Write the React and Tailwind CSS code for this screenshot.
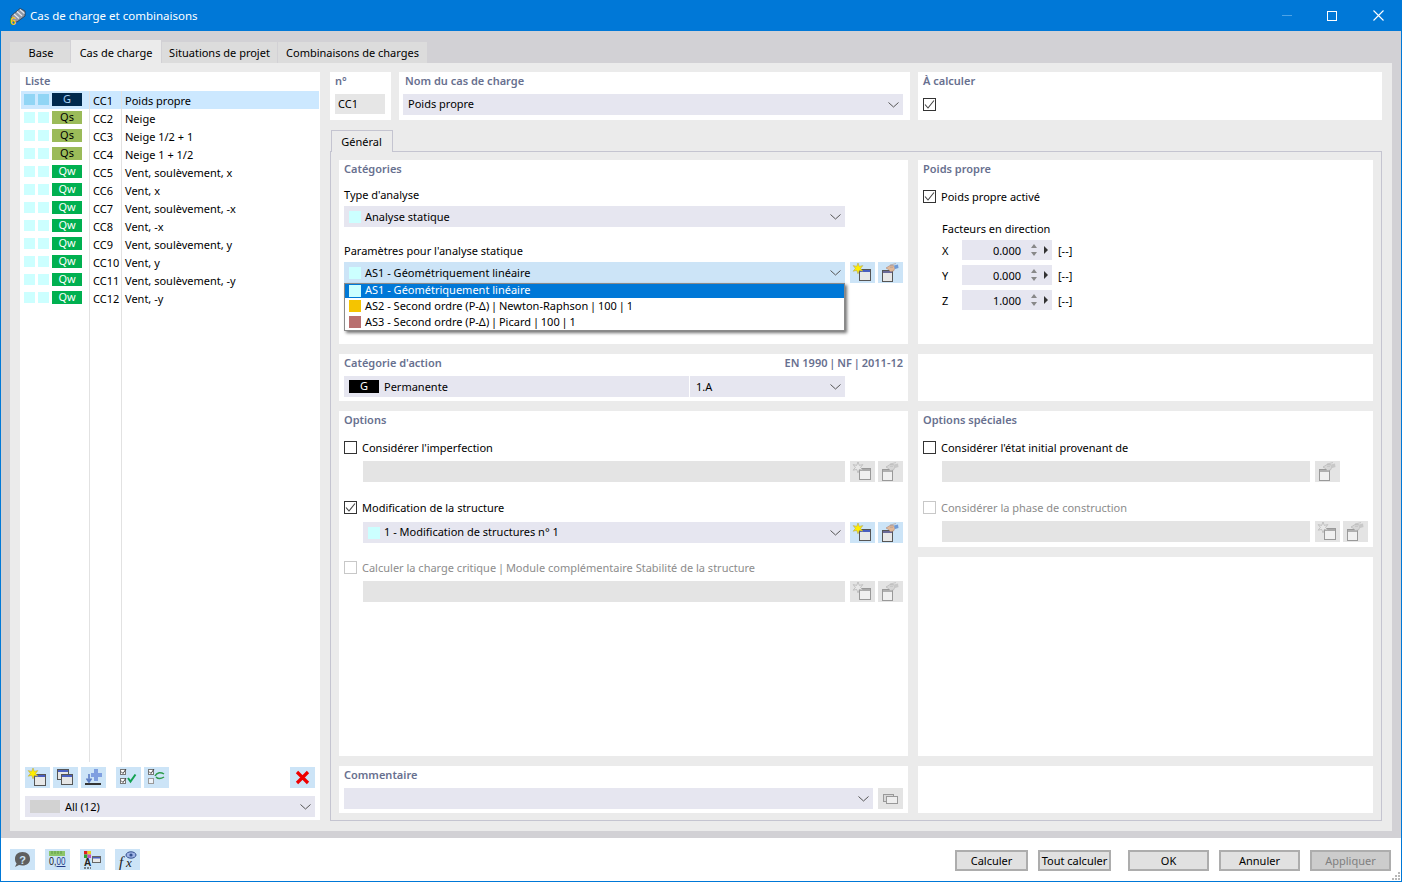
import React from "react";

const rows = [
  ["G", "CC1", "Poids propre"],
  ["Qs", "CC2", "Neige"],
  ["Qs", "CC3", "Neige 1/2 + 1"],
  ["Qs", "CC4", "Neige 1 + 1/2"],
  ["Qw", "CC5", "Vent, soulèvement, x"],
  ["Qw", "CC6", "Vent, x"],
  ["Qw", "CC7", "Vent, soulèvement, -x"],
  ["Qw", "CC8", "Vent, -x"],
  ["Qw", "CC9", "Vent, soulèvement, y"],
  ["Qw", "CC10", "Vent, y"],
  ["Qw", "CC11", "Vent, soulèvement, -y"],
  ["Qw", "CC12", "Vent, -y"],
];

const badge = {
  G: "bg-[#00294d] text-[#a9d3f5]",
  Qs: "bg-[#9bbb59] text-black",
  Qw: "bg-[#00b050] text-white",
};

function T({ children, className = "" }) {
  return <span className={`pt-[2px] ${className}`}>{children}</span>;
}

function Pipe() {
  return <span className="-mx-px">|</span>;
}

function Chevron() {
  return (
    <svg width="11" height="6" viewBox="0 0 11 6" className="shrink-0">
      <path d="M0.5 0.5 L5.5 5 L10.5 0.5" fill="none" stroke="#555" strokeWidth="1" />
    </svg>
  );
}

function Check({ on, disabled }) {
  return (
    <span className={`w-[13px] h-[13px] shrink-0 border bg-white flex items-center justify-center ${disabled ? "border-[#c8c8c8]" : "border-[#333]"}`}>
      {on && (
        <svg width="11" height="11" viewBox="0 0 11 11">
          <path d="M1 5.5 L4 9 L10 1.5" fill="none" stroke="#444" strokeWidth="1.1" />
        </svg>
      )}
    </span>
  );
}

function IconBtn({ children, off, className = "" }) {
  return (
    <span className={`w-[25px] h-[21px] shrink-0 flex items-center justify-center ${off ? "bg-[#e4e4e4]" : "bg-[#cce4f7]"} ${className}`}>
      {children}
    </span>
  );
}

function NewIcon({ off }) {
  return (
    <svg width="25" height="21" viewBox="0 0 25 21">
      <rect x="9.5" y="7.5" width="11" height="11" fill={off ? "#f0f0f0" : "#e8e8e8"} stroke={off ? "#999" : "#555"} />
      <rect x="10" y="8" width="10" height="2" fill={off ? "#aaa" : "#4a5fc0"} />
      <path d="M8 1 L9.3 4.4 L12.8 3.6 L10.6 6.4 L12.8 9.2 L9.3 8.4 L8 11.8 L6.7 8.4 L3.2 9.2 L5.4 6.4 L3.2 3.6 L6.7 4.4 Z" fill={off ? "#e8e8e8" : "#ffee00"} stroke={off ? "#aaa" : "#b9a84a"} strokeWidth="0.6" />
    </svg>
  );
}

function HandIcon({ off }) {
  return (
    <svg width="25" height="21" viewBox="0 0 25 21">
      <rect x="4.5" y="8.5" width="10" height="11" fill={off ? "#f0f0f0" : "#e8e8e8"} stroke={off ? "#999" : "#555"} />
      <rect x="5" y="9" width="9" height="2" fill={off ? "#b0b0b0" : "#6a6a98"} />
      <path d="M8 6 L12 3.5 L15.5 3.5 L17 6 L15.5 9 L12.5 9.5 L10.5 7.5 Z" fill={off ? "#d6d6d6" : "#e0b898"} stroke={off ? "#b0b0b0" : "#b08a78"} strokeWidth="0.6" />
      <path d="M12 3 L18 1.6 M12 5.2 L15 5.2" fill="none" stroke={off ? "#b8b8b8" : "#a89a98"} strokeWidth="0.7" />
      <path d="M16 3.5 L20 2.5 L20.5 6 L17 7 Z" fill={off ? "#c8c8c8" : "#6f9ad6"} />
    </svg>
  );
}

function Select({ w, active, children, off }) {
  return (
    <div className={`${w} h-[21px] shrink-0 flex items-center pl-[5px] pr-[4px] ${active ? "bg-[#cce4f7]" : off ? "bg-[#e4e4e4]" : "bg-[#e6e6f0]"}`}>
      <div className="flex-1 flex items-center min-w-0">{children}</div>
      {!off && <Chevron />}
    </div>
  );
}

function Sw({ c = "bg-[#ccffff]" }) {
  return <span className={`w-[12px] h-[12px] shrink-0 mr-[4px] ${c}`} />;
}

function Head({ children, right, className = "" }) {
  return (
    <div className={`h-[18px] leading-[18px] flex justify-between font-semibold text-[#68708f] ${className}`}>
      <span>{children}</span>
      {right && <span>{right}</span>}
    </div>
  );
}

function Card({ className = "", children }) {
  return <div className={`bg-white px-[5px] ${className}`}>{children}</div>;
}

function Factor({ l, v }) {
  return (
    <div className="flex items-center h-[20px] mb-[5px]">
      <T className="w-[20px]">{l}</T>
      <div className="w-[90px] h-[20px] bg-[#e6e6f0] flex items-center justify-end pr-[4px]">
        <T className="mr-[10px]">{v}</T>
        <svg width="6" height="14" viewBox="0 0 6 14" className="mr-[7px]">
          <path d="M3 1 L6 5 H0 Z" fill="#888" />
          <path d="M3 13 L6 9 H0 Z" fill="#888" />
        </svg>
        <svg width="4" height="8" viewBox="0 0 4 8">
          <path d="M0 0 L4 4 L0 8 Z" fill="#333" />
        </svg>
      </div>
      <T className="ml-[6px]">[--]</T>
    </div>
  );
}

function SmallWin({ x, y }) {
  return (
    <g>
      <rect x={x + 0.5} y={y + 0.5} width="11" height="10" fill="#e6e6e6" stroke="#555" />
      <rect x={x + 1} y={y + 1} width="10" height="2" fill="#4a5fc0" />
    </g>
  );
}

function CheckIcon({ swap }) {
  return (
    <svg width="25" height="21" viewBox="0 0 25 21">
      <rect x="4.5" y="2.5" width="5" height="5" fill="#fff" stroke="#777" />
      <path d="M5 4.5 L7 6.5 L10 2" fill="none" stroke="#444" />
      <rect x="4.5" y="11.5" width="5" height="5" fill={swap ? "#eef4fa" : "#fff"} stroke={swap ? "#999" : "#777"} />
      {!swap && <path d="M5 13.5 L7 15.5 L10 11" fill="none" stroke="#444" />}
      {swap ? (
        <>
          <path d="M11 9 C13 5 17 5 20 7" fill="none" stroke="#2d9c4a" strokeWidth="1.5" />
          <path d="M20 10 C17 12 14 12 12 10" fill="none" stroke="#2d9c4a" strokeWidth="1.5" />
        </>
      ) : (
        <path d="M12 11 L14.5 14.5 L19.5 7.5" fill="none" stroke="#12a150" strokeWidth="2" />
      )}
    </svg>
  );
}

function Footer({ children, off, w = "w-[81px]" }) {
  return (
    <span className={`${w} h-[21px] flex items-center justify-center border-2 border-[#adadad] ${off ? "bg-[#cccccc] text-[#7f7f7f]" : "bg-[#e1e1e1] text-black"}`}>
      <T>{children}</T>
    </span>
  );
}

export default function App() {
  return (
    <div className="w-[1402px] h-[882px] flex flex-col bg-[#d2d1d5] border-x border-b border-[#0078d7] text-black text-[11px] overflow-hidden font-['Noto_Sans','Open_Sans',sans-serif]">
      {/* title bar */}
      <div className="h-[31px] shrink-0 bg-[#0078d7] flex items-center pl-[8px] text-white text-[11.5px]">
        <svg width="17" height="18" viewBox="0 0 17 18" className="mr-[4px]">
          <path d="M2 9 L11 1.5 L16 4 L16 9 L8 15 L3 14 Z" fill="#8f99a8" stroke="#2f3540" strokeWidth="0.8" />
          <path d="M5 7 L10 11.5 M8 4.5 L13 9 M11 2.5 L15.5 6.5" stroke="#e6e9ef" strokeWidth="1.1" />
          <text x="1" y="17.5" fontSize="11" fontWeight="700" fill="#f5c518" fontFamily="Liberation Sans">6</text>
        </svg>
        <span>Cas de charge et combinaisons</span>
        <div className="ml-auto flex items-center">
          <span className="w-[10px] h-px bg-[#4da3e6] mr-[35px]" />
          <span className="w-[10px] h-[10px] border border-white mr-[36px]" />
          <svg width="11" height="11" viewBox="0 0 11 11" className="mr-[17px]">
            <path d="M0.5 0.5 L10.5 10.5 M10.5 0.5 L0.5 10.5" stroke="#fff" strokeWidth="1.1" />
          </svg>
        </div>
      </div>

      {/* tabs */}
      <div className="h-[22px] mt-[10px] ml-[9px] flex items-end shrink-0">
        <span className="w-[60px] h-[21px] bg-[#dcdcdc] flex items-center justify-center mr-px pl-[2px]"><T>Base</T></span>
        <span className="w-[90px] h-[23px] bg-[#ebebeb] flex items-center justify-center mr-px"><span className="pt-[4px]">Cas de charge</span></span>
        <span className="w-[115px] h-[21px] bg-[#dcdcdc] flex items-center justify-center mr-px"><T>Situations de projet</T></span>
        <span className="w-[149px] h-[21px] bg-[#dcdcdc] flex items-center justify-center"><T>Combinaisons de charges</T></span>
      </div>

      {/* panel */}
      <div className="w-[1382px] h-[768px] ml-[9px] shrink-0 bg-[#ebebeb] pt-[9px] pl-[10px] flex gap-[10px]">
        {/* list */}
        <div className="w-[300px] h-[748px] bg-white flex flex-col relative">
          <div className="h-[19px] leading-[18px] pl-[5px] font-semibold text-[#68708f]">Liste</div>
          <div className="h-[671px] pl-px relative">
            {rows.map(([b, id, name], i) => (
              <div key={id} className={`w-[298px] h-[18px] flex items-center ${i === 0 ? "bg-[#cce8ff]" : ""}`}>
                <span className={`ml-[3px] mb-px w-[11px] h-[11px] ${i === 0 ? "bg-[#91d5f5]" : "bg-[#ccffff]"}`} />
                <span className={`ml-[3px] mb-px w-[11px] h-[11px] ${i === 0 ? "bg-[#91d5f5]" : "bg-[#ccffff]"}`} />
                <span className={`ml-[3px] mb-px w-[30px] h-[13px] flex items-center justify-center ${badge[b]}`}>{b}</span>
                <T className="ml-[11px] w-[32px]">{id}</T>
                <T>{name}</T>
              </div>
            ))}
            <span className="absolute left-[69px] top-0 bottom-0 w-px bg-[#e2e2e2]" />
            <span className="absolute left-[101px] top-0 bottom-0 w-px bg-[#e2e2e2]" />
          </div>
          <div className="flex mt-[5px] pl-[5px] h-[21px]">
            <IconBtn><NewIcon /></IconBtn>
            <IconBtn className="ml-[3px]">
              <svg width="25" height="21" viewBox="0 0 25 21"><SmallWin x={4} y={2} /><SmallWin x={8} y={7} /></svg>
            </IconBtn>
            <IconBtn className="ml-[3px]">
              <svg width="25" height="21" viewBox="0 0 25 21">
                <path d="M4 17 H20" stroke="#333" strokeWidth="2" />
                <path d="M8 7 V14 M5.5 11.5 L8 15 L10.5 11.5" fill="none" stroke="#5b7cc4" strokeWidth="1.6" />
                <path d="M13 2 H17 V6 H21 V10 H17 V14 H13 V10 H10 V6 H13 Z" fill="#7f9fe0" />
              </svg>
            </IconBtn>
            <IconBtn className="ml-[10px]"><CheckIcon /></IconBtn>
            <IconBtn className="ml-[3px]"><CheckIcon swap /></IconBtn>
            <IconBtn className="ml-auto mr-[5px]">
              <svg width="25" height="21" viewBox="0 0 25 21">
                <path d="M7 5 L18 16 M18 5 L7 16" stroke="#ee0000" strokeWidth="3.2" />
              </svg>
            </IconBtn>
          </div>
          <div className="mt-[8px] ml-[5px]">
            <Select w="w-[290px]">
              <span className="w-[30px] h-[13px] bg-[#d2d2d2] mr-[5px]" />
              <T>All (12)</T>
            </Select>
          </div>
        </div>

        {/* right */}
        <div className="w-[1052px] flex flex-col">
          <div className="flex gap-[8px] h-[48px]">
            <Card className="w-[61px]">
              <Head>n°</Head>
              <div className="mt-[4px] w-[50px] h-[20px] bg-[#e6e6e6] flex items-center pl-[3px]">CC1</div>
            </Card>
            <Card className="w-[511px]">
              <Head className="ml-px">Nom du cas de charge</Head>
              <div className="mt-[4px] -ml-px">
                <Select w="w-[500px]">Poids propre</Select>
              </div>
            </Card>
            <Card className="w-[464px]">
              <Head>À calculer</Head>
              <div className="mt-[8px]"><Check on /></div>
            </Card>
          </div>

          <div className="mt-[10px] ml-px w-[62px] h-[22px] border border-b-0 border-[#c4c4d0] bg-[#ebebeb] flex items-center justify-center pr-px relative z-10"><T>Général</T></div>
          <div className="-mt-px w-[1052px] h-[670px] border border-[#c4c4d0] pt-[8px] pl-[8px]">
            <div className="grid grid-cols-[569px_455px] grid-rows-[184px_47px_136px_199px_47px] gap-[10px]">
              {/* Catégories */}
              <Card className="relative">
                <Head>Catégories</Head>
                <div className="mt-[9px] h-[16px] leading-[16px]">Type d'analyse</div>
                <div className="mt-[3px]">
                  <Select w="w-[501px]"><Sw /><T>Analyse statique</T></Select>
                </div>
                <div className="mt-[16px] h-[16px] leading-[16px]">Paramètres pour l'analyse statique</div>
                <div className="mt-[3px] flex items-center">
                  <Select w="w-[501px]" active><Sw /><T>AS1 - Géométriquement linéaire</T></Select>
                  <IconBtn className="ml-[5px]"><NewIcon /></IconBtn>
                  <IconBtn className="ml-[3px]"><HandIcon /></IconBtn>
                </div>
                <div className="absolute left-[5px] top-[123px] w-[501px] h-[48px] bg-white border border-[#8a8a8a] shadow-[2px_2px_3px_rgba(0,0,0,0.55)] z-20 flex flex-col">
                  <div className="h-[14px] bg-[#0078d7] text-white flex items-center pl-[4px]"><Sw /><span className="pb-[2px]">AS1 - Géométriquement linéaire</span></div>
                  <div className="h-[16px] flex items-center pl-[4px]"><Sw c="bg-[#f5c400]" /><span>AS2 - Second ordre (P-Δ) <Pipe /> Newton-Raphson <Pipe /> 100 <Pipe /> 1</span></div>
                  <div className="h-[16px] flex items-center pl-[4px]"><Sw c="bg-[#b96f6f]" /><span>AS3 - Second ordre (P-Δ) <Pipe /> Picard <Pipe /> 100 <Pipe /> 1</span></div>
                </div>
              </Card>

              {/* Poids propre */}
              <Card>
                <Head>Poids propre</Head>
                <div className="mt-[12px] h-[13px] flex items-center gap-[5px]"><Check on /><T>Poids propre activé</T></div>
                <div className="mt-[18px] ml-[19px] h-[16px] leading-[16px]">Facteurs en direction</div>
                <div className="mt-[3px] ml-[19px]">
                  <Factor l="X" v="0.000" />
                  <Factor l="Y" v="0.000" />
                  <Factor l="Z" v="1.000" />
                </div>
              </Card>

              {/* Action */}
              <Card>
                <Head right={<>EN 1990 <Pipe /> NF <Pipe /> 2011-12</>}>Catégorie d'action</Head>
                <div className="mt-[4px] w-[501px] h-[21px] bg-[#e6e6f0] flex items-center pr-[4px]">
                  <span className="ml-[5px] w-[30px] h-[13px] bg-black text-white flex items-center justify-center">G</span>
                  <T className="ml-[5px] w-[305px]">Permanente</T>
                  <span className="w-px h-[21px] bg-white" />
                  <T className="ml-[6px] flex-1">1.A</T>
                  <Chevron />
                </div>
              </Card>
              <Card />

              {/* Options */}
              <Card className="row-span-2">
                <Head>Options</Head>
                <div className="mt-[12px] h-[13px] flex items-center gap-[5px]"><Check /><T>Considérer l'imperfection</T></div>
                <div className="mt-[7px] ml-[19px] flex">
                  <Select w="w-[482px]" off />
                  <IconBtn off className="ml-[5px]"><NewIcon off /></IconBtn>
                  <IconBtn off className="ml-[3px]"><HandIcon off /></IconBtn>
                </div>
                <div className="mt-[19px] h-[13px] flex items-center gap-[5px]"><Check on /><T>Modification de la structure</T></div>
                <div className="mt-[8px] ml-[19px] flex">
                  <Select w="w-[482px]"><Sw /><span>1 - Modification de structures n° 1</span></Select>
                  <IconBtn className="ml-[5px]"><NewIcon /></IconBtn>
                  <IconBtn className="ml-[3px]"><HandIcon /></IconBtn>
                </div>
                <div className="mt-[18px] h-[13px] flex items-center gap-[5px] text-[#8c8c8c]"><Check disabled /><T>Calculer la charge critique <Pipe /> Module complémentaire Stabilité de la structure</T></div>
                <div className="mt-[7px] ml-[19px] flex">
                  <Select w="w-[482px]" off />
                  <IconBtn off className="ml-[5px]"><NewIcon off /></IconBtn>
                  <IconBtn off className="ml-[3px]"><HandIcon off /></IconBtn>
                </div>
              </Card>

              {/* Options spéciales */}
              <Card>
                <Head>Options spéciales</Head>
                <div className="mt-[12px] h-[13px] flex items-center gap-[5px]"><Check /><T>Considérer l'état initial provenant de</T></div>
                <div className="mt-[7px] ml-[19px] flex">
                  <Select w="w-[368px]" off />
                  <IconBtn off className="ml-[5px]"><HandIcon off /></IconBtn>
                </div>
                <div className="mt-[19px] h-[13px] flex items-center gap-[5px] text-[#8c8c8c]"><Check disabled /><T>Considérer la phase de construction</T></div>
                <div className="mt-[7px] ml-[19px] flex">
                  <Select w="w-[368px]" off />
                  <IconBtn off className="ml-[5px]"><NewIcon off /></IconBtn>
                  <IconBtn off className="ml-[3px]"><HandIcon off /></IconBtn>
                </div>
              </Card>
              <Card />

              {/* Commentaire */}
              <Card>
                <Head>Commentaire</Head>
                <div className="mt-[4px] flex">
                  <Select w="w-[529px]"> </Select>
                  <IconBtn off className="ml-[5px]">
                    <svg width="25" height="21" viewBox="0 0 25 21">
                      <rect x="5.5" y="6.5" width="10" height="7" fill="#d8d8d8" stroke="#999" />
                      <rect x="8.5" y="8.5" width="11" height="7" fill="#eeeeee" stroke="#999" />
                    </svg>
                  </IconBtn>
                </div>
              </Card>
              <Card />
            </div>
          </div>
        </div>
      </div>

      {/* footer */}
      <div className="mt-[7px] flex-1 bg-white flex items-start pt-[11px] pl-[9px] pr-[10px] relative">
        <IconBtn>
          <svg width="25" height="21" viewBox="0 0 25 21">
            <path d="M12.5 3 C17.5 3 20 6 20 10 C20 14 17 16.5 12.5 16.5 C11 16.5 10 16.3 9 16 L5 18 L6.6 14.5 C5.5 13.3 5 11.8 5 10 C5 6 7.5 3 12.5 3 Z" fill="#5f5f5f" />
            <text x="12.5" y="14.5" textAnchor="middle" fontSize="11" fontWeight="700" fill="#cce4f7" fontFamily="Liberation Sans">?</text>
          </svg>
        </IconBtn>
        <IconBtn className="ml-[10px]">
          <svg width="25" height="21" viewBox="0 0 25 21">
            <rect x="4" y="2" width="16" height="5" fill="#8cc66a" />
            <path d="M7 2 V5 M10 2 V5 M13 2 V5 M16 2 V5" stroke="#5f9a46" />
            <text x="4" y="16" fontSize="10" textLength="7.5" lengthAdjust="spacingAndGlyphs" fill="#222" fontFamily="Liberation Sans">0,</text>
            <text x="11.5" y="16" fontSize="10" textLength="9" lengthAdjust="spacingAndGlyphs" fill="#223a88" fontFamily="Liberation Sans">00</text>
            <path d="M11.5 17.5 H20.5" stroke="#223a88" />
          </svg>
        </IconBtn>
        <IconBtn className="ml-[10px]">
          <svg width="25" height="21" viewBox="0 0 25 21">
            <rect x="4" y="2" width="3.5" height="3.5" fill="#e02020" />
            <rect x="7.5" y="2" width="3.5" height="3.5" fill="#e8d020" />
            <rect x="4" y="5.5" width="3.5" height="3.5" fill="#30a030" />
            <rect x="7.5" y="5.5" width="3.5" height="3.5" fill="#c050c0" />
            <text x="7.5" y="17" textAnchor="middle" fontSize="10" fontWeight="700" fill="#222" fontFamily="Liberation Sans">A</text>
            <path d="M4 19 H11" stroke="#222" strokeDasharray="2 1" />
            <rect x="12.5" y="7.5" width="8" height="6" fill="#e8e8e8" stroke="#666" />
            <rect x="13" y="8" width="7" height="1.5" fill="#4a5fc0" />
          </svg>
        </IconBtn>
        <IconBtn className="ml-[10px]">
          <svg width="25" height="21" viewBox="0 0 25 21">
            <text x="4" y="18" fontSize="15" fontStyle="italic" fontFamily="Liberation Serif" fill="#222">f</text>
            <text x="11" y="18" fontSize="13" fontStyle="italic" fontFamily="Liberation Serif" fill="#222">x</text>
            <ellipse cx="16" cy="6" rx="5" ry="3.2" fill="#9fb4e6" stroke="#33508f" />
            <circle cx="16" cy="6" r="1.6" fill="#33508f" />
          </svg>
        </IconBtn>
        <div className="ml-auto flex mt-[1px]">
          <Footer w="w-[73px]">Calculer</Footer>
          <span className="w-[10px]" />
          <Footer w="w-[73px]">Tout calculer</Footer>
          <span className="w-[17px]" />
          <Footer>OK</Footer>
          <span className="w-[10px]" />
          <Footer>Annuler</Footer>
          <span className="w-[10px]" />
          <Footer off>Appliquer</Footer>
        </div>
        <svg width="9" height="9" viewBox="0 0 9 9" className="absolute right-[1px] bottom-[1px]">
          <path d="M7 1 h2 v2 h-2 Z M4 4 h2 v2 h-2 Z M7 4 h2 v2 h-2 Z M1 7 h2 v2 h-2 Z M4 7 h2 v2 h-2 Z M7 7 h2 v2 h-2 Z" fill="#b8b8b8" />
        </svg>
      </div>
    </div>
  );
}
